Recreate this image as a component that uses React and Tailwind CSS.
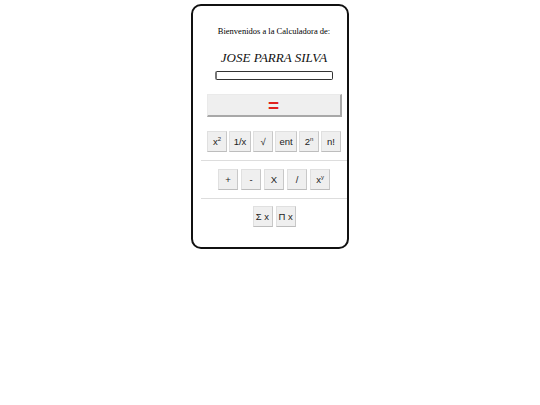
import React from "react";

const Btn = ({ children, w = "w-[20px]" }) => (
    <button
        className={`${w} h-[21px] bg-[#efefef] border border-[#e0e0e0] border-r-[#c8c8c8] border-b-[#bdbdbd] text-[9.5px] text-[#222] flex items-center justify-center`}
        style={{ fontFamily: "'Liberation Sans', Arial, sans-serif" }}
    >
        {children}
    </button>
);

const App = () => {
    return (
        <div className="w-[540px] h-[405px] bg-white flex justify-center pt-[4px]">
            <div className="w-[158px] h-[245px] border-2 border-[#111] rounded-[10px] flex flex-col items-center pl-[8px]">
                <span
                    className="mt-[19px] text-[8.5px] text-black"
                    style={{ fontFamily: "'Liberation Serif', serif" }}
                >
                    Bienvenidos a la Calculadora de:
                </span>
                <span
                    className="mt-[10px] text-[13px] italic text-[#111]"
                    style={{ fontFamily: "'Liberation Serif', serif" }}
                >
                    JOSE PARRA SILVA
                </span>
                <div className="mt-[4px] w-[118px] h-[9px] border border-[#333] border-l-2 border-l-[#777] rounded-[2px] bg-white" />
                <button className="mt-[14px] w-[135px] h-[23px] bg-[#efefef] border border-[#eaeaea] border-r-2 border-b-2 border-r-[#a8a8a8] border-b-[#a8a8a8] flex items-center justify-center">
                    <span
                        className="text-[19px] leading-none text-[#e0201e] font-bold"
                        style={{ fontFamily: "'Liberation Sans', Arial, sans-serif" }}
                    >
                        =
                    </span>
                </button>
                <div className="mt-[14px] flex gap-[2px]">
                    <Btn>
                        x<sup className="text-[6px]">2</sup>
                    </Btn>
                    <Btn w="w-[22px]">1/x</Btn>
                    <Btn>√</Btn>
                    <Btn w="w-[22px]">ent</Btn>
                    <Btn>
                        2<sup className="text-[6px]">n</sup>
                    </Btn>
                    <Btn>n!</Btn>
                </div>
                <div className="mt-[8px] self-stretch h-px bg-[#ddd]" />
                <div className="mt-[8px] flex gap-[3px]">
                    <Btn>+</Btn>
                    <Btn>-</Btn>
                    <Btn>X</Btn>
                    <Btn>/</Btn>
                    <Btn>
                        x<sup className="text-[6px]">y</sup>
                    </Btn>
                </div>
                <div className="mt-[8px] self-stretch h-px bg-[#ddd]" />
                <div className="mt-[7px] flex gap-[3px]">
                    <Btn>Σ x</Btn>
                    <Btn>Π x</Btn>
                </div>
            </div>
        </div>
    );
};

export default App;
